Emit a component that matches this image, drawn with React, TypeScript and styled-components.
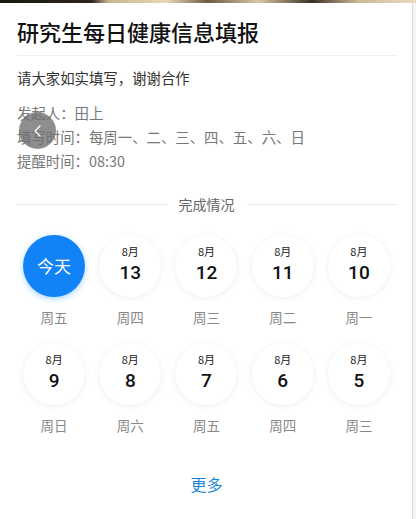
import React from "react";
import styled, { createGlobalStyle } from "styled-components";

const Global = createGlobalStyle`
  html, body { margin: 0; padding: 0; background: #fff; }
  body { font-family: "Noto Sans CJK SC", "Noto Sans", sans-serif; }
`;

const Page = styled.div`
  width: 416px;
  height: 519px;
  display: flex;
  flex-direction: column;
  overflow: hidden;
  position: relative;
  background: #fafafa;
`;

const TopStrip = styled.div`
  height: 3px;
  flex: none;
  background: linear-gradient(90deg, #1a1712 0%, #2a241c 22%, #c9b48e 26%, #e8d9b8 40%, #6b5a44 50%, #d8c7a3 62%, #3b3126 75%, #cdb894 86%, #e9dcc1 100%);
`;

const Body = styled.div`
  flex: 1;
  display: flex;
`;

const Card = styled.div`
  width: 413px;
  background: #fff;
  border-right: 1px solid #d9d9d9;
  padding: 0 15px 0 16px;
  box-sizing: border-box;
  display: flex;
  flex-direction: column;
`;

const Side = styled.div`
  flex: 1;
  background: #f7f6f3;
`;

const Title = styled.h1`
  margin: 13px 0 0 1px;
  font-size: 22px;
  line-height: 30px;
  font-weight: 500;
  color: #111;
  padding-bottom: 9px;
  border-bottom: 1px solid #efefef;
`;

const Desc = styled.p`
  margin: 12px 0 0 1px;
  font-size: 14.4px;
  line-height: 20px;
  color: #333;
`;

const Info = styled.div`
  margin: 13px 0 0 1px;
  display: flex;
  flex-direction: column;
`;

const InfoLine = styled.div`
  font-size: 14.4px;
  line-height: 24px;
  color: #777;
`;

const SectionHead = styled.div`
  margin-top: 21px;
  display: flex;
  align-items: center;
  gap: 12px;
  font-size: 14px;
  line-height: 20px;
  color: #666;
  &::before, &::after {
    content: "";
    flex: 1;
    height: 1px;
    background: #ececec;
  }
`;

const Grid = styled.div`
  margin-top: 21px;
  display: grid;
  grid-template-columns: repeat(5, 1fr);
  row-gap: 16px;
`;

const Cell = styled.div`
  display: flex;
  flex-direction: column;
  align-items: center;
`;

const Circle = styled.div<{ $today?: boolean }>`
  width: 62px;
  height: 62px;
  border-radius: 50%;
  box-sizing: border-box;
  padding-bottom: ${(p) => (p.$today ? "0" : "4px")};
  display: flex;
  flex-direction: column;
  align-items: center;
  justify-content: center;
  background: ${(p) => (p.$today ? "#1283f6" : "#fff")};
  box-shadow: ${(p) =>
    p.$today ? "0 2px 6px rgba(18,131,246,0.35)" : "0 1px 6px rgba(0,0,0,0.07)"};
  color: ${(p) => (p.$today ? "#fff" : "#111")};
`;

const Today = styled.span`
  font-size: 17px;
  line-height: 20px;
`;

const Month = styled.span`
  font-size: 11px;
  line-height: 14px;
  color: #222;
  margin-bottom: 4px;
`;

const Day = styled.span`
  font-family: Roboto, "Noto Sans", sans-serif;
  font-size: 19px;
  line-height: 22px;
  font-weight: 500;
  color: #111;
`;

const Week = styled.div`
  margin-top: 10px;
  font-size: 13.5px;
  line-height: 20px;
  color: #888;
`;

const More = styled.div`
  margin-top: 38px;
  text-align: center;
  font-size: 16px;
  line-height: 22px;
  color: #1a86d9;
`;

const BackBtn = styled.div`
  position: absolute;
  left: 19px;
  top: 112px;
  width: 37px;
  height: 37px;
  border-radius: 50%;
  background: rgba(110, 110, 110, 0.78);
  display: flex;
  align-items: center;
  justify-content: center;
`;

const days = [
  { d: "13", w: "周四" },
  { d: "12", w: "周三" },
  { d: "11", w: "周二" },
  { d: "10", w: "周一" },
  { d: "9", w: "周日" },
  { d: "8", w: "周六" },
  { d: "7", w: "周五" },
  { d: "6", w: "周四" },
  { d: "5", w: "周三" },
];

export default function App() {
  return (
    <Page>
      <Global />
      <TopStrip />
      <Body>
        <Card>
          <Title>研究生每日健康信息填报</Title>
          <Desc>请大家如实填写，谢谢合作</Desc>
          <Info>
            <InfoLine>发起人：田上</InfoLine>
            <InfoLine>填写时间：每周一、二、三、四、五、六、日</InfoLine>
            <InfoLine>提醒时间：08:30</InfoLine>
          </Info>
          <SectionHead>完成情况</SectionHead>
          <Grid>
            <Cell>
              <Circle $today>
                <Today>今天</Today>
              </Circle>
              <Week>周五</Week>
            </Cell>
            {days.map((x, i) => (
              <Cell key={i}>
                <Circle>
                  <Month>8月</Month>
                  <Day>{x.d}</Day>
                </Circle>
                <Week>{x.w}</Week>
              </Cell>
            ))}
          </Grid>
          <More>更多</More>
        </Card>
        <Side />
      </Body>
      <BackBtn>
        <svg width="14" height="14" viewBox="0 0 14 14" fill="none">
          <path d="M9 2 L4 7 L9 12" stroke="#fff" strokeWidth="1.4" strokeLinecap="round" strokeLinejoin="round" />
        </svg>
      </BackBtn>
    </Page>
  );
}
